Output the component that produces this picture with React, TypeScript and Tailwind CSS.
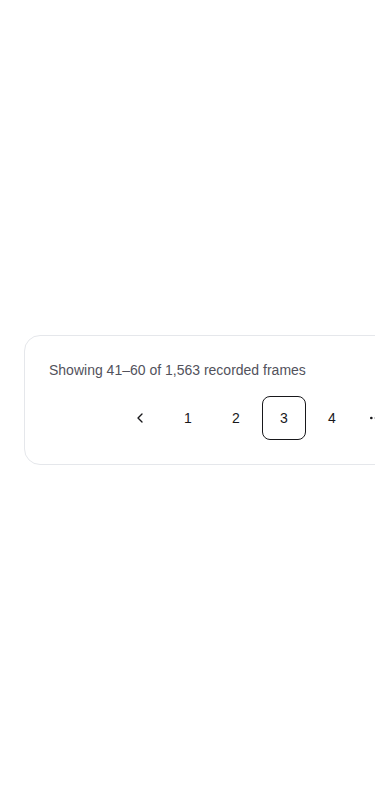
import React from 'react';
import { ChevronLeft, ChevronRight, Ellipsis } from 'lucide-react';

const pages: (number | 'gap')[] = [1, 2, 3, 4, 'gap', 79];

export default function App() {
  const current = 3;
  return (
    <div
      className="min-h-screen bg-white flex items-center overflow-hidden"
      style={{ fontFamily: '"Liberation Sans", Arial, sans-serif' }}
    >
      <div className="ml-6 w-[568px] shrink-0 rounded-2xl border border-gray-200 bg-white p-6 flex flex-col gap-4">
        <p className="text-sm leading-5 text-zinc-600">Showing 41–60 of 1,563 recorded frames</p>
        <nav className="flex justify-center gap-1 ml-[-8px]">
          <button className="w-11 h-11 flex items-center justify-center rounded-lg text-zinc-900">
            <ChevronLeft size={16} strokeWidth={2} />
          </button>
          {pages.map((p, i) =>
            p === 'gap' ? (
              <span key={i} className="w-9 h-11 flex items-center justify-center text-zinc-900">
                <Ellipsis size={16} strokeWidth={2} />
              </span>
            ) : (
              <button
                key={i}
                className={
                  p === current
                    ? 'w-11 h-11 flex items-center justify-center rounded-lg border border-zinc-900 text-sm text-zinc-900'
                    : 'w-11 h-11 flex items-center justify-center rounded-lg text-sm text-zinc-900'
                }
              >
                {p}
              </button>
            )
          )}
          <button className="w-11 h-11 flex items-center justify-center rounded-lg text-zinc-900">
            <ChevronRight size={16} strokeWidth={2} />
          </button>
        </nav>
      </div>
    </div>
  );
}
